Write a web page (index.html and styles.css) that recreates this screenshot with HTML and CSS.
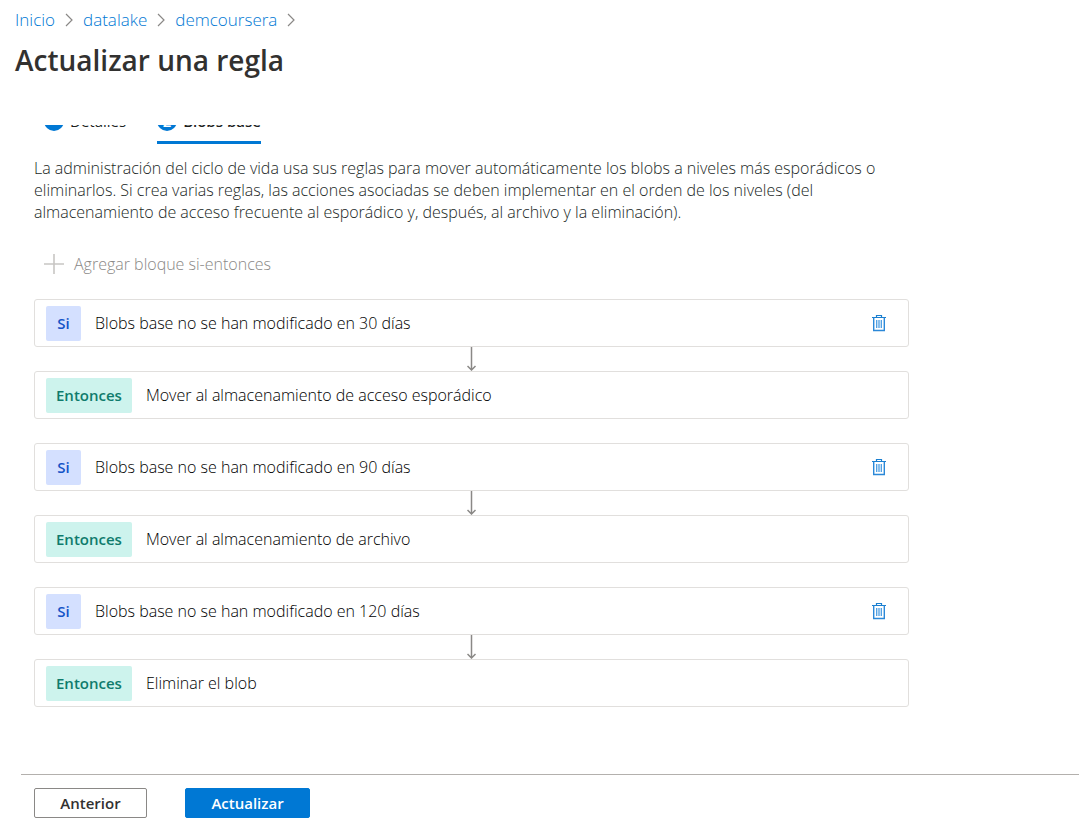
FILE: index.html
```html
<!DOCTYPE html>
<html lang="es">
<head>
    <meta charset="UTF-8">
    <meta name="viewport" content="width=device-width, initial-scale=1.0">
    <title>Actualizar una regla</title>
    <link rel="stylesheet" href="styles.css">
</head>
<body>
    <svg class="sprite" aria-hidden="true">
        <symbol id="chevron" viewBox="0 0 8 14">
            <path d="M1 1l6 6-6 6" fill="none" stroke="#8a8886" stroke-width="1.2"/>
        </symbol>
        <symbol id="arrow" viewBox="0 0 10 24">
            <path d="M4.5 0v23M.5 19l4 4 4-4" fill="none" stroke="#8a8886" stroke-width="1.5"/>
        </symbol>
        <symbol id="trash" viewBox="0 0 14 18">
            <path d="M0 3.5h14M4.5 3.5v-2h5v2" fill="none" stroke="#1a7fd0" stroke-width="1.2"/>
            <path d="M1.7 3.5v13h10.6v-13" fill="none" stroke="#2b88d8" stroke-width="1.4"/>
            <path d="M4.7 6v8M7 6v8M9.3 6v8" fill="none" stroke="#4a9de2" stroke-width="1.3"/>
        </symbol>
    </svg>

    <header class="header">
        <nav class="breadcrumb" aria-label="Ruta">
            <a href="#">Inicio</a>
            <svg class="chevron"><use href="#chevron"/></svg>
            <a href="#">datalake</a>
            <svg class="chevron"><use href="#chevron"/></svg>
            <a href="#">demcoursera</a>
            <svg class="chevron"><use href="#chevron"/></svg>
        </nav>
        <h1>Actualizar una regla</h1>
    </header>

    <main class="content">
        <div class="tabs" role="tablist">
            <button class="tab" role="tab" aria-selected="false"><span class="step"></span>Detalles</button>
            <button class="tab active" role="tab" aria-selected="true"><span class="step">2</span>Blobs base</button>
        </div>

        <p class="description">La administración del ciclo de vida usa sus reglas para mover automáticamente los blobs a niveles más esporádicos o eliminarlos. Si crea varias reglas, las acciones asociadas se deben implementar en el orden de los niveles (del almacenamiento de acceso frecuente al esporádico y, después, al archivo y la eliminación).</p>

        <button class="add" disabled>
            <svg viewBox="0 0 20 20"><path d="M10 0v20M0 10h20" stroke="#c8c6c4" stroke-width="1.6"/></svg>
            Agregar bloque si-entonces
        </button>

        <section class="block">
            <div class="card">
                <span class="badge if">Si</span>
                <span class="text">Blobs base no se han modificado en 30 días</span>
                <button class="delete" aria-label="Eliminar"><svg><use href="#trash"/></svg></button>
            </div>
            <svg class="arrow"><use href="#arrow"/></svg>
            <div class="card">
                <span class="badge then">Entonces</span>
                <span class="text">Mover al almacenamiento de acceso esporádico</span>
            </div>
        </section>

        <section class="block">
            <div class="card">
                <span class="badge if">Si</span>
                <span class="text">Blobs base no se han modificado en 90 días</span>
                <button class="delete" aria-label="Eliminar"><svg><use href="#trash"/></svg></button>
            </div>
            <svg class="arrow"><use href="#arrow"/></svg>
            <div class="card">
                <span class="badge then">Entonces</span>
                <span class="text">Mover al almacenamiento de archivo</span>
            </div>
        </section>

        <section class="block">
            <div class="card">
                <span class="badge if">Si</span>
                <span class="text">Blobs base no se han modificado en 120 días</span>
                <button class="delete" aria-label="Eliminar"><svg><use href="#trash"/></svg></button>
            </div>
            <svg class="arrow"><use href="#arrow"/></svg>
            <div class="card">
                <span class="badge then">Entonces</span>
                <span class="text">Eliminar el blob</span>
            </div>
        </section>
    </main>

    <footer class="footer">
        <button class="btn">Anterior</button>
        <button class="btn primary">Actualizar</button>
    </footer>
</body>
</html>
```
FILE: styles.css
```css
* {
    box-sizing: border-box;
}
body {
    display: flex;
    flex-direction: column;
    min-height: 100vh;
    margin: 0;
    background-color: #fff;
    color: #201f1e;
    font-family: "Segoe UI", "Open Sans", "Noto Sans", sans-serif;
    font-size: 16px;
    font-weight: 320;
    line-height: 22px;
}
button {
    padding: 0;
    border: none;
    background: none;
    color: inherit;
    font: inherit;
    cursor: pointer;
}
.sprite {
    display: none;
}
.header {
    padding: 8px 15px 0;
}
.breadcrumb {
    display: flex;
    align-items: center;
    gap: 10px;
    font-size: 17px;
    line-height: 24px;
}
.breadcrumb a {
    color: #0078d4;
    text-decoration: none;
}
.chevron {
    width: 8px;
    height: 14px;
}
h1 {
    margin: 9px 0 0;
    color: #323130;
    font-size: 28px;
    font-weight: 600;
    line-height: 38px;
}
.content {
    flex: 1;
    max-width: 943px;
    padding: 46px 34px 24px;
}
.tabs {
    display: flex;
    align-items: flex-end;
    gap: 21px;
    height: 19px;
    overflow: hidden;
}
.tab {
    display: flex;
    align-items: center;
    gap: 6px;
    flex: none;
    padding: 0 10px 10px;
    border-bottom: 3px solid transparent;
    font-size: 15px;
    font-weight: 400;
    line-height: 20px;
}
.tab.active {
    padding: 0 0 10px;
    border-color: #0078d4;
    font-weight: 600;
}
.step {
    width: 20px;
    height: 20px;
    border-radius: 50%;
    background-color: #0078d4;
    color: #fff;
    font-size: 15px;
}
.description {
    margin: 13px 0 30px;
}
.add {
    display: flex;
    align-items: center;
    gap: 10px;
    margin: 0 0 24px 10px;
    color: #8a8886;
}
.add svg {
    width: 20px;
    height: 20px;
}
.block {
    display: flex;
    flex-direction: column;
    margin-bottom: 24px;
}
.card {
    display: flex;
    align-items: center;
    gap: 14px;
    height: 48px;
    padding: 0 22px 0 11px;
    border: 1px solid #e1dfdd;
    border-radius: 3px;
}
.badge {
    min-width: 35px;
    padding: 0 10px;
    border-radius: 2px;
    font-size: 15px;
    font-weight: 600;
    line-height: 35px;
    text-align: center;
}
.if {
    background-color: #d4e0ff;
    color: #1553c7;
}
.then {
    background-color: #cdf3ed;
    color: #0f7b6c;
}
.text {
    flex: 1;
    color: #000;
}
.delete svg {
    display: block;
    width: 14px;
    height: 18px;
}
.arrow {
    align-self: center;
    width: 10px;
    height: 24px;
}
.footer {
    display: flex;
    gap: 38px;
    margin-left: 21px;
    padding: 13px 13px 11px;
    border-top: 1px solid #b3b0ad;
}
.btn {
    min-width: 113px;
    height: 30px;
    border: 1px solid #8a8886;
    border-radius: 2px;
    color: #323130;
    font-size: 15px;
    font-weight: 600;
}
.primary {
    min-width: 125px;
    border-color: #0078d4;
    background-color: #0078d4;
    color: #fff;
}
```
